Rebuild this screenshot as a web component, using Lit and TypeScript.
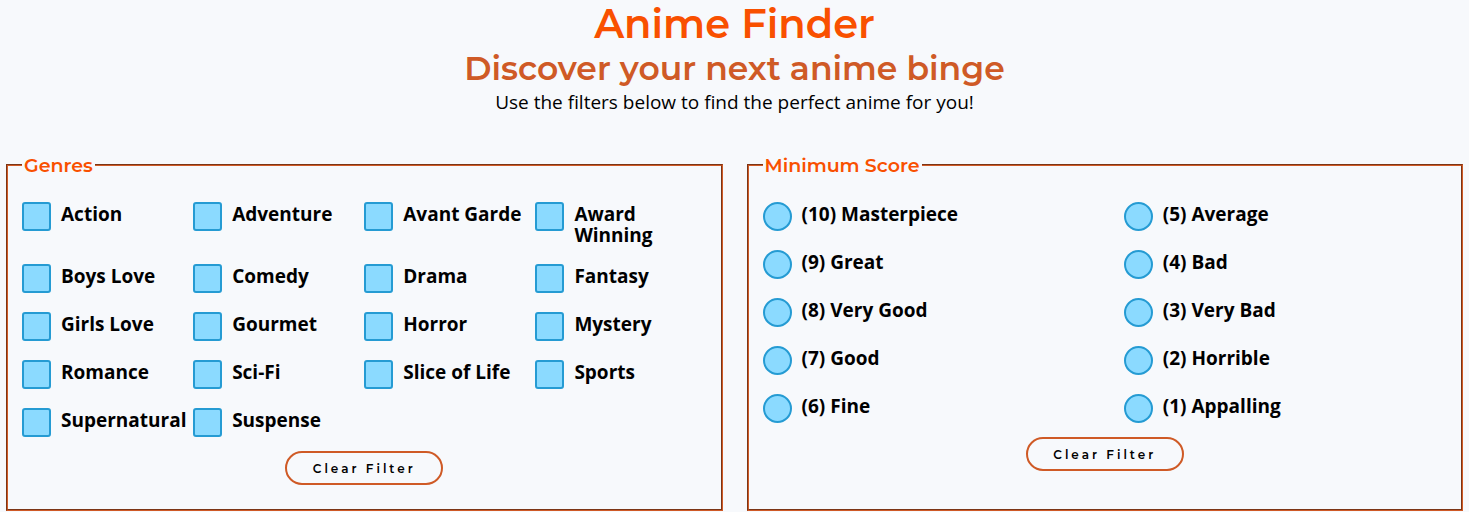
import { LitElement, html, css } from "lit";
import { customElement } from "lit/decorators.js";

const GENRES = [
  "Action", "Adventure", "Avant Garde", "Award Winning",
  "Boys Love", "Comedy", "Drama", "Fantasy",
  "Girls Love", "Gourmet", "Horror", "Mystery",
  "Romance", "Sci-Fi", "Slice of Life", "Sports",
  "Supernatural", "Suspense",
];

const SCORES: [number, string][] = [
  [10, "Masterpiece"], [9, "Great"], [8, "Very Good"], [7, "Good"], [6, "Fine"],
  [5, "Average"], [4, "Bad"], [3, "Very Bad"], [2, "Horrible"], [1, "Appalling"],
];

@customElement("app-root")
export class AppRoot extends LitElement {
  static styles = css`
    :host {
      display: block;
      min-height: 100vh;
      background: #f7f9fc;
      color: #000;
      font-family: "Open Sans", sans-serif;
      font-size: 19px;
      line-height: 21px;
    }
    * {
      box-sizing: border-box;
    }
    .intro {
      text-align: center;
    }
    .title,
    .subtitle {
      margin: 0;
      font-family: "Montserrat", "Inter", sans-serif;
      font-weight: 600;
    }
    .title {
      color: #f95000;
      font-size: 40px;
      line-height: 48px;
    }
    .subtitle {
      color: #cf5a26;
      font-size: 33px;
      line-height: 40px;
    }
    .lead {
      margin: 0;
      line-height: 28px;
    }
    .filters {
      display: grid;
      grid-template-columns: 1fr 1fr;
      gap: 24px;
      padding: 36px 6px 0;
    }
    .panel {
      min-width: 0;
      margin: 0;
      padding: 24px 14px;
      border: 2px groove #cf5a26;
    }
    .legend {
      padding: 2px 2px 0;
      color: #f95000;
      font-family: "Montserrat", "Inter", sans-serif;
      font-weight: 600;
      line-height: 24px;
    }
    .options {
      display: grid;
      row-gap: 20px;
    }
    .genres {
      grid-template-columns: repeat(4, 1fr);
    }
    .scores {
      grid-template-columns: 1fr 1fr;
      grid-template-rows: repeat(5, auto);
      grid-auto-flow: column;
      column-gap: 38px;
    }
    .option {
      display: flex;
      align-items: flex-start;
      gap: 10px;
      min-width: 0;
      min-height: 28px;
      font-weight: 700;
    }
    .name {
      padding-top: 2px;
      margin-bottom: -2px;
    }
    .box {
      appearance: none;
      flex: none;
      width: 29px;
      height: 29px;
      margin: 0 0 -1px;
      border: 2px solid #259bd3;
      border-radius: 3px;
      background: #8bdaff;
    }
    .box[type="radio"] {
      border-radius: 50%;
    }
    .box:checked {
      background: #259bd3;
    }
    .clear {
      display: block;
      width: 158px;
      height: 34px;
      margin: 15px auto 0;
      padding: 0;
      border: 2px solid #cf5a26;
      border-radius: 17px;
      background: transparent;
      color: #000;
      font-family: "Montserrat", "Inter", sans-serif;
      font-size: 12px;
      font-weight: 600;
      letter-spacing: 3px;
      cursor: pointer;
    }
  `;

  private clear(event: Event) {
    const panel = (event.currentTarget as HTMLElement).closest("fieldset")!;
    panel.querySelectorAll("input").forEach((input) => (input.checked = false));
  }

  render() {
    return html`
      <header class="intro">
        <h1 class="title">Anime Finder</h1>
        <h2 class="subtitle">Discover your next anime binge</h2>
        <p class="lead">Use the filters below to find the perfect anime for you!</p>
      </header>
      <main class="filters">
        <fieldset class="panel">
          <legend class="legend">Genres</legend>
          <div class="options genres">
            ${GENRES.map(
              (name) => html`<label class="option">
                <input class="box" type="checkbox" name="genre" value=${name} />
                <span class="name">${name}</span>
              </label>`
            )}
          </div>
          <button class="clear" type="button" @click=${this.clear}>Clear Filter</button>
        </fieldset>
        <fieldset class="panel">
          <legend class="legend">Minimum Score</legend>
          <div class="options scores">
            ${SCORES.map(
              ([score, name]) => html`<label class="option">
                <input class="box" type="radio" name="score" value=${score} />
                <span class="name">(${score}) ${name}</span>
              </label>`
            )}
          </div>
          <button class="clear" type="button" @click=${this.clear}>Clear Filter</button>
        </fieldset>
      </main>
    `;
  }
}
